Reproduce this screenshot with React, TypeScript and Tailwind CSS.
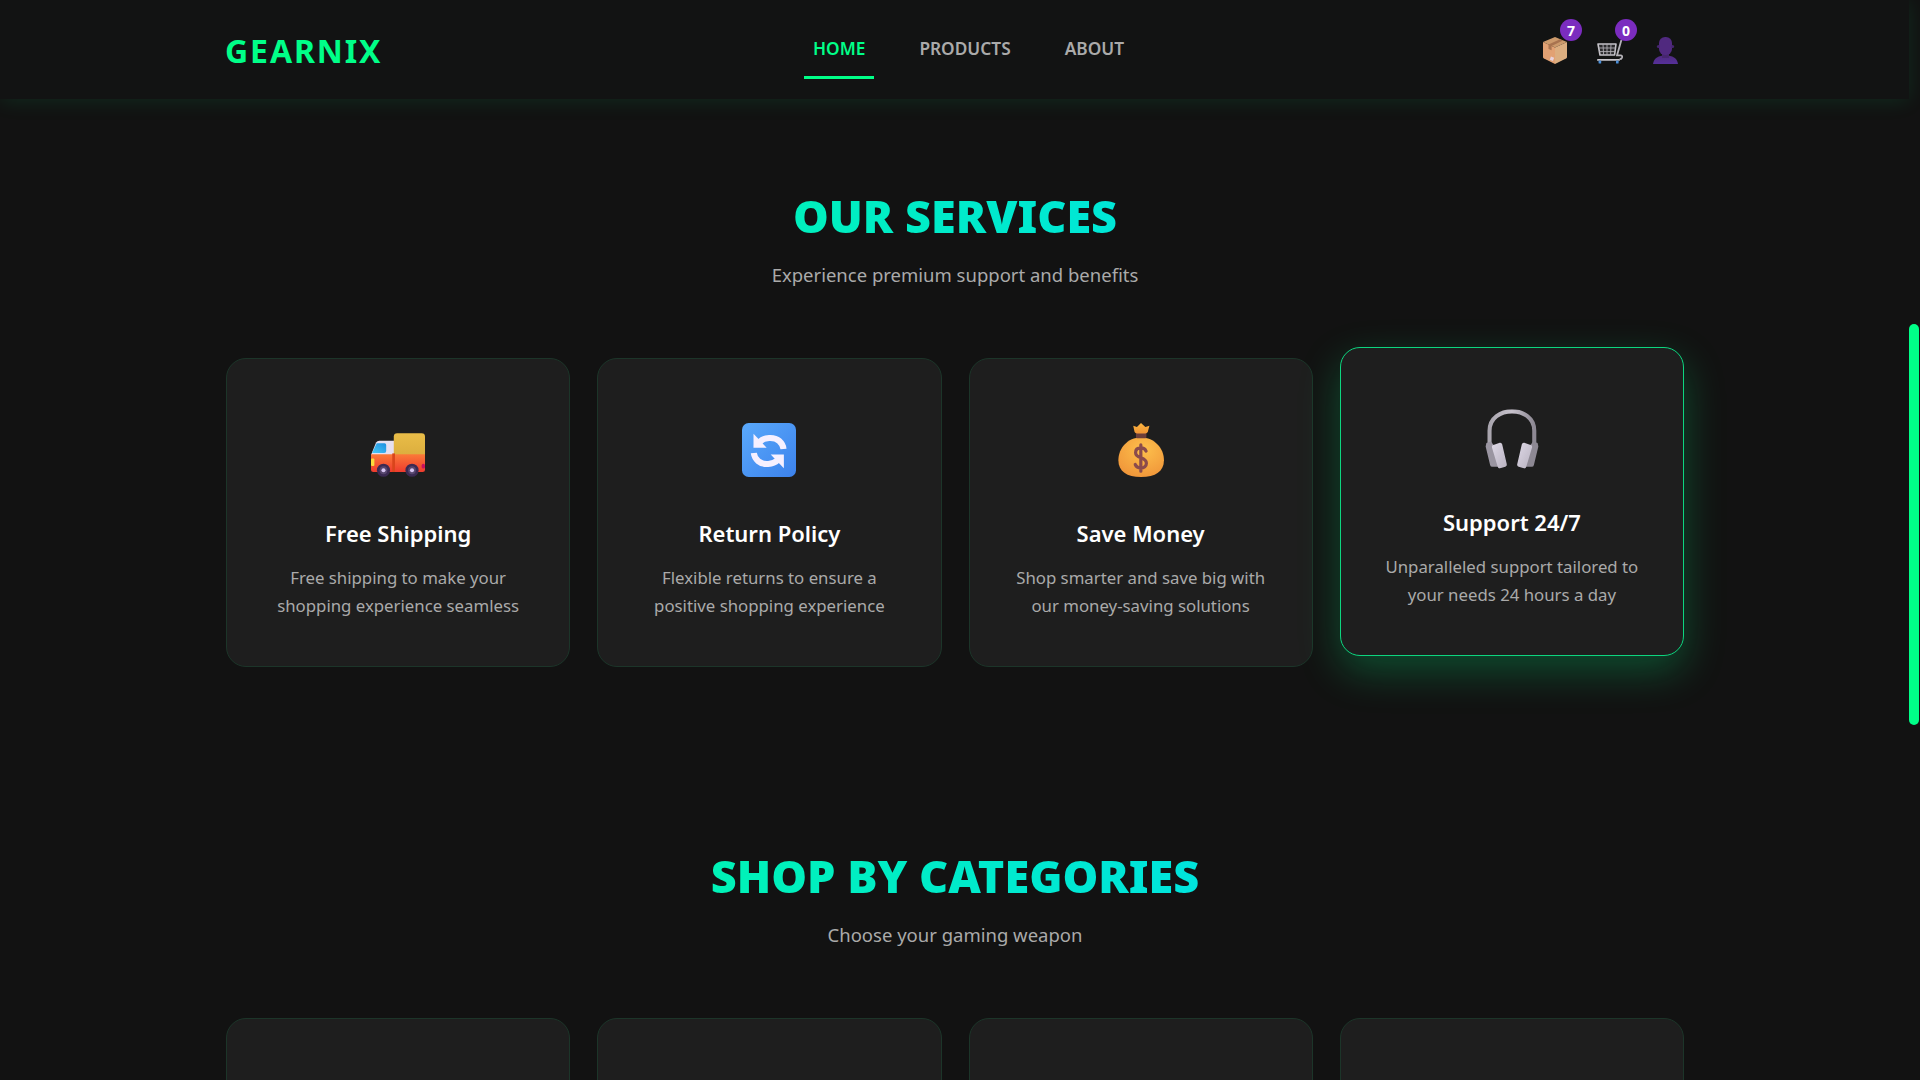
import type { ReactNode } from "react";

function Truck() {
  return (
    <svg viewBox="0 0 32 32" className="w-full h-full">
      <defs>
        <linearGradient id="cargo" x1="0" y1="0" x2="0" y2="1">
          <stop offset="0" stopColor="#e9bd48" />
          <stop offset="1" stopColor="#dcae3e" />
        </linearGradient>
        <linearGradient id="body" x1="0" y1="0" x2="0" y2="1">
          <stop offset="0" stopColor="#fb7a38" />
          <stop offset="1" stopColor="#ee3b2e" />
        </linearGradient>
        <linearGradient id="glass" x1="0" y1="1" x2="1" y2="0">
          <stop offset="0" stopColor="#49c9f5" />
          <stop offset="1" stopColor="#1c8ee2" />
        </linearGradient>
      </defs>
      <path d="M0 19 L3 11.5 Q3.6 10.5 5 10.5 H15 V20 H0 Z" fill="#e6dff0" />
      <path d="M.6 17.8 L3.4 12 H8 Q9 12 9 13 V16.6 Q9 17.8 7.8 17.8 Z" fill="url(#glass)" />
      <path d="M13.5 19 V8 Q13.5 6 15.5 6 H30 Q32 6 32 8 V19 Z" fill="url(#cargo)" />
      <path d="M0 18.5 H32 V27.5 Q32 29 30.5 29 H1.5 Q0 29 0 27.5 Z" fill="url(#body)" />
      <rect x="12.6" y="18" width="1.6" height="11" fill="#d9451c" />
      <rect x="0" y="21" width="2" height="4.5" rx=".6" fill="#fbdc3c" />
      <rect x="30" y="24.2" width="2" height="2.8" rx="1" fill="#c8105e" />
      <circle cx="7.4" cy="28" r="3.9" fill="#3b2a52" />
      <circle cx="7.4" cy="28" r="2.3" fill="#57476e" />
      <circle cx="7.4" cy="28" r="1.2" fill="#d8c6f2" />
      <circle cx="24.3" cy="28" r="3.9" fill="#3b2a52" />
      <circle cx="24.3" cy="28" r="2.3" fill="#57476e" />
      <circle cx="24.3" cy="28" r="1.2" fill="#d8c6f2" />
    </svg>
  );
}

function ReturnBox() {
  const arrow = (
    <>
      <path d="M10.6 11 C13 8.6 19 8 22 10.6 C23.6 12 24.4 13.6 24.6 15.4" fill="none" stroke="#f6f0ff" strokeWidth="3.6" />
      <path d="M6.8 6.4 L14.6 14.6 L6.8 14.6 Z" fill="#f6f0ff" strokeLinejoin="round" />
    </>
  );
  return (
    <svg viewBox="0 0 32 32" className="w-full h-full">
      <defs>
        <linearGradient id="blue" x1="0" y1="0" x2="1" y2="1">
          <stop offset="0" stopColor="#5aa9fb" />
          <stop offset="1" stopColor="#3c82ec" />
        </linearGradient>
      </defs>
      <rect x="0" y="0" width="32" height="32" rx="4" fill="url(#blue)" />
      {arrow}
      <g transform="rotate(180 15.8 16.6)">{arrow}</g>
    </svg>
  );
}

function MoneyBag() {
  return (
    <svg viewBox="0 0 32 32" className="w-full h-full">
      <defs>
        <radialGradient id="bag" cx="0.55" cy="0.3" r="0.8">
          <stop offset="0" stopColor="#fdc04c" />
          <stop offset="1" stopColor="#ef9238" />
        </radialGradient>
        <linearGradient id="knot" x1="0" y1="0" x2="0" y2="1">
          <stop offset="0" stopColor="#fcb641" />
          <stop offset="1" stopColor="#f09535" />
        </linearGradient>
      </defs>
      <path d="M16 8.6 C8 8.6 2.6 15 2.6 22 C2.6 28.6 7.6 32 16 32 C24.6 32 29.6 28.6 29.6 22 C29.6 15 24 8.6 16 8.6 Z" fill="url(#bag)" />
      <rect x="13" y="5.6" width="6.2" height="3.4" rx=".6" fill="#6d3e3a" />
      <path d="M11.4 1.6 L13.6 2.4 L16 0 L18.6 2.4 L21 1.6 L20 5.4 Q19.6 6.2 18.6 6.2 H13.6 Q12.6 6.2 12.2 5.4 Z" fill="url(#knot)" />
      <path d="M19 16.6 C18.4 15.2 17.2 14.8 15.9 14.8 C14 14.8 12.8 15.9 12.8 17.6 C12.8 21.4 19.2 19.8 19.2 23.8 C19.2 25.6 17.8 26.6 15.9 26.6 C14.4 26.6 13.2 26 12.6 24.6 M15.9 13 V28.6" fill="none" stroke="#8a4b4c" strokeWidth="1.9" strokeLinecap="round" />
    </svg>
  );
}

function Headphones() {
  return (
    <svg viewBox="0 0 32 32" className="w-full h-full">
      <defs>
        <linearGradient id="band" x1="0" y1="0" x2="1" y2="0">
          <stop offset="0" stopColor="#a9a5ae" />
          <stop offset="0.5" stopColor="#c7c2cc" />
          <stop offset="1" stopColor="#8d8893" />
        </linearGradient>
        <linearGradient id="pad" x1="0" y1="0" x2="1" y2="1">
          <stop offset="0" stopColor="#ded8e6" />
          <stop offset="1" stopColor="#b8b2c0" />
        </linearGradient>
      </defs>
      <path d="M3.9 18.5 V11.5 C3.9 4.4 10 1.1 16 1.1 C22 1.1 28 4.4 28 11.5 V18.5" fill="none" stroke="url(#band)" strokeWidth="2.2" />
      <path d="M2.2 18.2 L4.6 17.4 L6.2 19.4 L9 31 H5.4 Q4.4 31 4.2 30 L1.8 20 Z" fill="#9a95a1" />
      <path d="M5.6 19.4 L9.4 18 Q10.4 17.8 10.7 18.8 L13.2 29.6 Q13.4 30.6 12.4 30.9 L9.6 31.8 Q8.6 32 8.3 31 L5.2 20.6 Q5 19.7 5.6 19.4 Z" fill="url(#pad)" />
      <path d="M29.8 18.2 L27.4 17.4 L25.8 19.4 L23 31 H26.6 Q27.6 31 27.8 30 L30.2 20 Z" fill="#8d8893" />
      <path d="M26.4 19.4 L22.6 18 Q21.6 17.8 21.3 18.8 L18.8 29.6 Q18.6 30.6 19.6 30.9 L22.4 31.8 Q23.4 32 23.7 31 L26.8 20.6 Q27 19.7 26.4 19.4 Z" fill="url(#pad)" />
    </svg>
  );
}

function PackageIcon() {
  return (
    <svg viewBox="0 0 24 27" className="w-[24px] h-[27px]">
      <path d="M12 0 L24 5 L12 10.5 L0 5 Z" fill="#cc9a6c" />
      <path d="M0 5 L12 10.5 V27 L1 21.6 Q0 21 0 20 Z" fill="#e2a173" />
      <path d="M24 5 L12 10.5 V27 L23 21.6 Q24 21 24 20 Z" fill="#dcae80" />
      <path d="M17 2.2 L5.5 7.6 V12 L8.6 13.2 V9 L20 3.5 Z" fill="#a8734f" />
      <rect x="7.5" y="20" width="3.4" height="3.4" fill="#e8d2dc" transform="rotate(20 9 21)" />
    </svg>
  );
}

function CartIcon() {
  return (
    <svg viewBox="0 0 26 24" className="w-[26px] h-[24px]">
      <path d="M1 4 H19 L17.6 15 H3 Z" fill="#2a2a2c" stroke="#c4c2c8" strokeWidth="1.6" strokeLinejoin="round" />
      <path d="M6 4 L6.6 15 M10 4 V15 M14 4 L13.6 15 M1.6 8 H18.4 M2.4 11.6 H18" stroke="#b0aeb4" strokeWidth="0.9" fill="none" />
      <path d="M24.4 0 L20 15.4 H24 Q25.6 15.6 25 17.6 Q24.4 19.2 22.6 19.2" fill="none" stroke="#b4b2b8" strokeWidth="1.8" />
      <rect x="0" y="19" width="23" height="1.8" rx=".9" fill="#c8c6cc" />
      <rect x="1.6" y="20.6" width="2.6" height="3" rx=".6" fill="#4b8fd8" />
      <rect x="19" y="20.6" width="2.6" height="3" rx=".6" fill="#4b8fd8" />
    </svg>
  );
}

function UserIcon() {
  return (
    <svg viewBox="0 0 25 27" className="w-[25px] h-[27px]">
      <defs>
        <linearGradient id="bust" x1="0" y1="0" x2="0" y2="1">
          <stop offset="0" stopColor="#4f2a7e" />
          <stop offset="1" stopColor="#56309a" />
        </linearGradient>
      </defs>
      <path d="M0 27 C1 21 5.5 18.6 12.5 18.6 C19.5 18.6 24 21 25 27 Z" fill="url(#bust)" />
      <rect x="9" y="14" width="7" height="7" fill="#46266f" />
      <rect x="6" y="0" width="13" height="18" rx="6" fill="#50297f" />
      <circle cx="5.4" cy="9.6" r="1.5" fill="#46266f" />
      <circle cx="19.6" cy="9.6" r="1.5" fill="#46266f" />
    </svg>
  );
}

function HeaderIcon({ badge, children }: { badge?: string; children: ReactNode }) {
  return (
    <div className="relative flex items-end justify-center w-[28px] h-[27px]">
      {children}
      {badge && (
        <span className="absolute -top-[18px] left-[19px] flex items-center justify-center w-[22px] h-[22px] rounded-full bg-[#7b2cbf] text-white text-[14px] font-bold">
          {badge}
        </span>
      )}
    </div>
  );
}

const services = [
  {
    title: "Free Shipping",
    lines: ["Free shipping to make your", "shopping experience seamless"],
    icon: <Truck />,
  },
  {
    title: "Return Policy",
    lines: ["Flexible returns to ensure a", "positive shopping experience"],
    icon: <ReturnBox />,
  },
  {
    title: "Save Money",
    lines: ["Shop smarter and save big with", "our money-saving solutions"],
    icon: <MoneyBag />,
  },
  {
    title: "Support 24/7",
    lines: ["Unparalleled support tailored to", "your needs 24 hours a day"],
    icon: <Headphones />,
    active: true,
  },
];

function SectionTitle({ title, sub }: { title: string; sub: string }) {
  return (
    <div className="text-center">
      <h2 className="text-[45px] leading-[62px] font-black bg-gradient-to-r from-[#00ff88] to-[#00d4ff] bg-clip-text text-transparent">
        {title}
      </h2>
      <p className="mt-[14px] text-[18.5px] leading-[28px] text-[#aaaaaa]">{sub}</p>
    </div>
  );
}

export default function App() {
  return (
    <div className="flex h-screen overflow-hidden bg-[#121212] font-['Noto_Sans',sans-serif]">
      <div className="flex-1 min-w-0">
        {/* header */}
        <header className="h-[99px] bg-[#121313] shadow-[0_2px_20px_rgba(0,255,136,0.1)]">
          <div className="ml-[226px] mr-[225px] h-full flex items-start">
            <div className="w-[578px] -ml-px pt-[29px] text-[32px] leading-[44px] font-bold tracking-[1.9px] text-[#00ff88]">
              GEARNIX
            </div>
            <nav className="ml-px flex gap-[36px] text-[17.3px] font-semibold text-[#aaaaaa]">
              <a className="h-[79px] pt-[36px] px-[9px] leading-[26px] text-[#00ff88] border-b-[3px] border-[#00ff88]">HOME</a>
              <a className="h-[79px] pt-[36px] px-[9px] leading-[26px]">PRODUCTS</a>
              <a className="h-[79px] pt-[36px] px-[9px] leading-[26px]">ABOUT</a>
            </nav>
            <div className="ml-auto mr-[5px] mt-[37px] flex gap-[27px]">
              <HeaderIcon badge="7">
                <PackageIcon />
              </HeaderIcon>
              <HeaderIcon badge="0">
                <CartIcon />
              </HeaderIcon>
              <HeaderIcon>
                <UserIcon />
              </HeaderIcon>
            </div>
          </div>
        </header>

        <main className="pl-[226px] pr-[225px]">
          <section className="pt-[86px]">
            <SectionTitle title="OUR SERVICES" sub="Experience premium support and benefits" />
            <div className="mt-[69px] grid grid-cols-4 gap-[27px]">
              {services.map((s) => (
                <div
                  key={s.title}
                  className={
                    s.active
                      ? "h-[309px] pt-[64px] rounded-[20px] bg-[#1e1e1e] border border-[#0dd57f] text-center -translate-y-[11px] shadow-[0_15px_40px_rgba(0,255,136,0.25)]"
                      : "h-[309px] pt-[64px] rounded-[20px] bg-[#1e1e1e] border border-[#1c3529] text-center"
                  }
                >
                  <div className={s.active ? "mx-auto w-[54px] h-[54px] scale-110" : "mx-auto w-[54px] h-[54px]"}>{s.icon}</div>
                  <h3 className="mt-[41px] text-[22px] leading-[30px] font-semibold text-white">{s.title}</h3>
                  <p className="mt-[16px] text-[16.8px] leading-[28px] text-[#aaaaaa]">
                    {s.lines[0]}
                    <br />
                    {s.lines[1]}
                  </p>
                </div>
              ))}
            </div>
          </section>

          <section className="pt-[178px]">
            <SectionTitle title="SHOP BY CATEGORIES" sub="Choose your gaming weapon" />
            <div className="mt-[69px] grid grid-cols-4 gap-[27px]">
              <div className="h-[309px] rounded-[20px] bg-[#1e1e1e] border border-[#1c3529]" />
              <div className="h-[309px] rounded-[20px] bg-[#1e1e1e] border border-[#1c3529]" />
              <div className="h-[309px] rounded-[20px] bg-[#1e1e1e] border border-[#1c3529]" />
              <div className="h-[309px] rounded-[20px] bg-[#1e1e1e] border border-[#1c3529]" />
            </div>
          </section>
        </main>
      </div>

      {/* scrollbar */}
      <div className="w-[11px] shrink-0 pt-[324px] pr-px">
        <div className="h-[401px] rounded-full bg-[#00ff88]" />
      </div>
    </div>
  );
}
